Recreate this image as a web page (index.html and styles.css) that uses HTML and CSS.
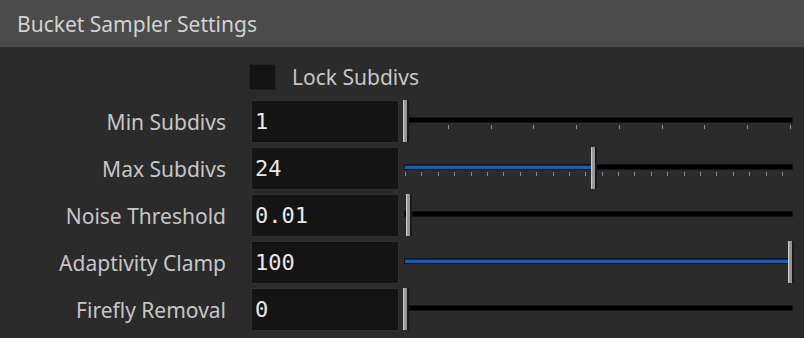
FILE: index.html
```html
<!DOCTYPE html>
<html lang="en">

<head>
    <meta charset="UTF-8">
    <meta name="viewport" content="width=device-width, initial-scale=1.0">
    <link rel="stylesheet" href="styles.css">
    <title>Bucket Sampler Settings</title>
</head>

<body>
    <section class="painel">
        <header class="painelCabecalho">Bucket Sampler Settings</header>
        <div class="painelCorpo">
            <div class="linhaLock">
                <span class="caixaCheck"></span>
                <span class="linhaLock_texto">Lock Subdivs</span>
            </div>
            <div class="listaParametros">
                <div class="parametro">
                    <label class="parametro_nome">Min Subdivs</label>
                    <div class="parametro_valor">1</div>
                    <div class="slider">
                        <div class="slider_trilho"></div>
                        <div class="slider_marcas marcasDez">
                            <i></i><i></i><i></i><i></i><i></i><i></i><i></i><i></i><i></i><i></i>
                        </div>
                        <span class="slider_alca" style="left: 4px"></span>
                    </div>
                </div>
                <div class="parametro">
                    <label class="parametro_nome">Max Subdivs</label>
                    <div class="parametro_valor">24</div>
                    <div class="slider">
                        <div class="slider_trilho">
                            <div class="slider_preenchido" style="width: 186px"></div>
                        </div>
                        <div class="slider_marcas marcasVinte">
                            <i></i><i></i><i></i><i></i><i></i><i></i><i></i><i></i><i></i><i></i><i></i><i></i>
                            <i></i><i></i><i></i><i></i><i></i><i></i><i></i><i></i><i></i><i></i><i></i><i></i>
                        </div>
                        <span class="slider_alca" style="left: 192px"></span>
                    </div>
                </div>
                <div class="parametro">
                    <label class="parametro_nome">Noise Threshold</label>
                    <div class="parametro_valor">0.01</div>
                    <div class="slider">
                        <div class="slider_trilho"></div>
                        <span class="slider_alca" style="left: 7px"></span>
                    </div>
                </div>
                <div class="parametro">
                    <label class="parametro_nome">Adaptivity Clamp</label>
                    <div class="parametro_valor">100</div>
                    <div class="slider">
                        <div class="slider_trilho">
                            <div class="slider_preenchido" style="width: 100%"></div>
                        </div>
                        <span class="slider_alca" style="left: 389px"></span>
                    </div>
                </div>
                <div class="parametro">
                    <label class="parametro_nome">Firefly Removal</label>
                    <div class="parametro_valor">0</div>
                    <div class="slider">
                        <div class="slider_trilho"></div>
                        <span class="slider_alca" style="left: 4px"></span>
                    </div>
                </div>
            </div>
        </div>
    </section>
</body>

</html>
```

FILE: styles.css
```css
body {
    margin: 0;
    padding: 0;
    background-color: #2b2b2b;
    font-family: 'Noto Sans', 'Open Sans', sans-serif;
    color: #c6c6c6;
}

/* Cabecalho */
.painelCabecalho {
    height: 47px;
    display: flex;
    align-items: center;
    padding-left: 17px;
    background-color: #4b4b4b;
    color: #d2d2d2;
    font-size: 21px;
}

.painelCorpo {
    padding-top: 17px;
}

/* Lock */
.linhaLock {
    display: flex;
    align-items: center;
    gap: 16px;
    height: 26px;
    padding-left: 249px;
    margin-bottom: 10px;
}

.caixaCheck {
    width: 25px;
    height: 24px;
    background-color: #141414;
    border: 1px solid #222;
}

.linhaLock_texto {
    font-size: 21px;
}

/* Parametros */
.listaParametros {
    display: flex;
    flex-direction: column;
    gap: 4px;
}

.parametro {
    display: flex;
    align-items: center;
    height: 43px;
}

.parametro_nome {
    width: 226px;
    margin-right: 25px;
    text-align: right;
    font-size: 21px;
}

.parametro_valor {
    box-sizing: border-box;
    width: 148px;
    height: 43px;
    padding-left: 3px;
    display: flex;
    align-items: center;
    background-color: #141414;
    border: 1px solid #303030;
    color: #e8e8e8;
    font-family: 'DejaVu Sans Mono', monospace;
    font-size: 22px;
}

/* Slider */
.slider {
    position: relative;
    flex: 1;
    align-self: stretch;
}

.slider_trilho {
    height: 4px;
    margin: 18px 12px 0 6px;
    background-color: #000;
    box-shadow: 0 0 0 1px #141414;
}

.slider_preenchido {
    box-sizing: border-box;
    height: 4px;
    background-color: #1b5cae;
    border-top: 1px solid #0e2b52;
}

.slider_marcas {
    display: flex;
    justify-content: space-between;
    margin-top: 3px;
    margin-left: 6px;
}

.slider_marcas i {
    width: 1px;
    height: 4px;
    background-color: #8e8e8e;
}

.marcasDez {
    margin-right: 13px;
}

.marcasVinte {
    margin-right: 21px;
}

.slider_alca {
    position: absolute;
    top: 0;
    width: 6px;
    height: 42px;
    background: linear-gradient(to right, #c8c8c8 0 1px, #a2a2a2 1px, #8c8c8c 4px, #1a1a1a 4px);
}
```
